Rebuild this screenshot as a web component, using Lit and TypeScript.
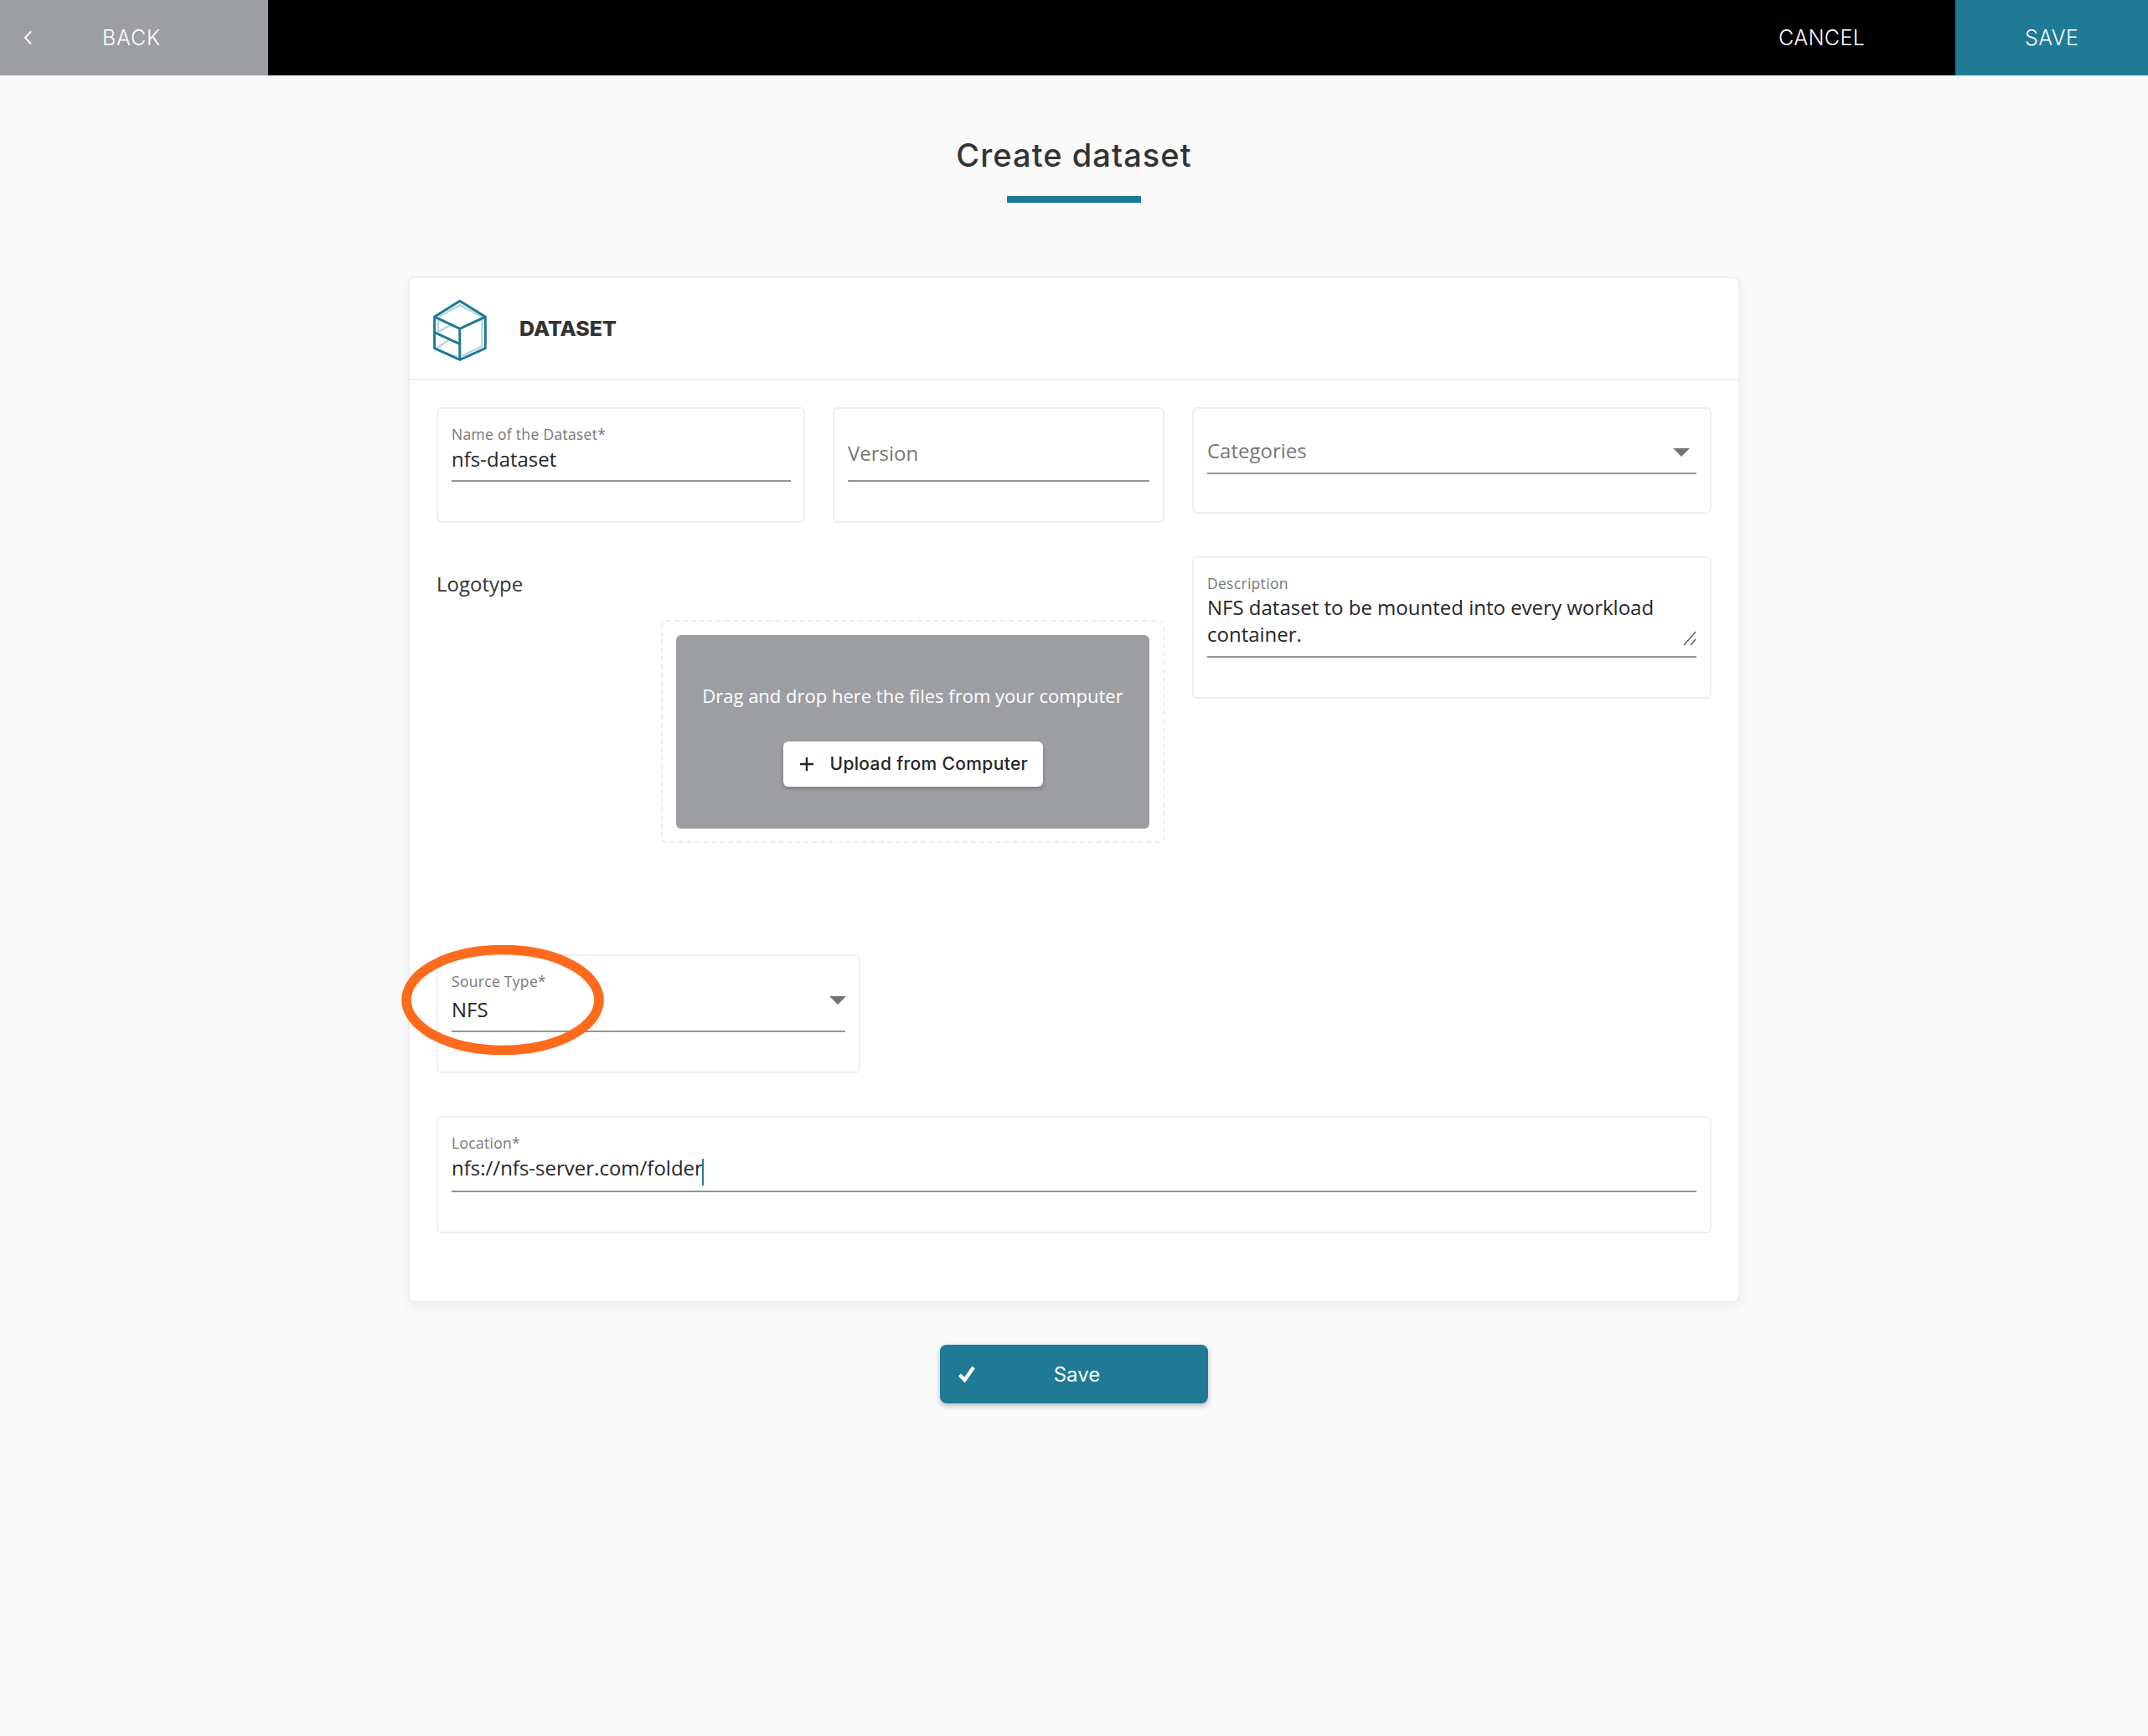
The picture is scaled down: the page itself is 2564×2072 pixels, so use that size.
import { LitElement, html, css } from "lit";
import { customElement } from "lit/decorators.js";

@customElement("app-root")
export class AppRoot extends LitElement {
  static styles = css`
    :host { display: block; position: relative; min-height: 2072px; background: #fafafa; font-family: "Open Sans", sans-serif; color: #262626; overflow: hidden; }
    * { box-sizing: border-box; }
    .top { display: flex; align-items: stretch; height: 90px; background: #000; color: #fff; font-family: Inter, sans-serif; font-size: 25px; font-weight: 300; line-height: 90px; }
    .back { position: relative; width: 320px; background: #9d9ea2; padding-left: 122px; display: flex; letter-spacing: 0.8px; }
    .back svg { position: absolute; left: 27px; top: 36px; }
    .spacer { flex: 1; }
    .cancel { width: 211px; letter-spacing: 0.4px; }
    .save-top { width: 230px; background: #1f7a96; padding-left: 83px; letter-spacing: 0.4px; }
    .title { margin: 73px 0 0; text-align: center; font-family: Inter, sans-serif; font-weight: 500; font-size: 38px; line-height: 44px; color: #333; letter-spacing: 1.05px; }
    .rule { width: 160px; height: 8px; background: #1f7a96; margin: 27px auto 88px; }
    .card { width: 1590px; margin: 0 auto; background: #fff; border: 2px solid #eeeeee; border-radius: 8px; box-shadow: 0 4px 14px rgba(30,50,70,.07); }
    .card-head { display: flex; align-items: center; height: 122px; border-bottom: 2px solid #eceef0; padding-left: 24px; }
    .card-head svg { margin-top: 3px; }
    .card-head h2 { margin: 0 0 0 34px; font-family: Inter, sans-serif; font-weight: 800; font-size: 25px; color: #333; letter-spacing: 0; }
    .body { padding: 32px 32px 81px 32px; }
    .row { display: flex; gap: 33px; align-items: flex-start; }
    .field { background: #fff; border: 2px solid #eeeeee; border-radius: 6px; padding: 20px 16px 47px; position: relative; }
    .label { font-size: 17.5px; line-height: 20px; color: #777; letter-spacing: 0.3px; }
    .value { font-size: 24px; line-height: 30px; margin-top: 5px; padding-bottom: 10px; border-bottom: 2px solid #949494; position: relative; color: #262626; }
    .placeholder { color: #777; }
    .name { width: 440px; padding-right: 15px; }
    .version { width: 396px; padding-top: 38px; }
    .version .value { margin-top: 0; padding-bottom: 17px; }
    .cats { flex: 1; padding-top: 35px; padding-bottom: 45px; }
    .cats .value { margin-top: 0; padding-bottom: 11px; }
    .arrow { position: absolute; width: 0; height: 0; border-left: 10px solid transparent; border-right: 10px solid transparent; border-top: 10px solid #757575; }
    .cats .arrow { top: 12px; right: 8px; }
    .row2 { margin-top: 40px; }
    .left { width: 869px; padding-top: 18px; }
    .logo-label { font-size: 24px; line-height: 30px; color: #333; }
    .drop { margin: 28px 0 0 268px; width: 601px; height: 266px; border: 2px dashed #eeeeee; border-radius: 6px; padding: 16px 16px 15px 16px; }
    .drop-inner { height: 231px; background: #9d9ea2; border-radius: 6px; color: #fff; display: flex; flex-direction: column; align-items: center; padding-top: 57px; font-size: 22px; line-height: 30px; }
    .upload { margin-top: 40px; width: 310px; height: 54px; background: #fff; border-radius: 6px; box-shadow: 0 2px 4px rgba(0,0,0,.25); display: flex; align-items: center; color: #262626; font-family: Inter, sans-serif; font-weight: 500; font-size: 21px; padding-left: 18px; letter-spacing: 0.35px; }
    .upload svg { margin-right: 18px; }
    .desc { flex: 1; }
    .desc .value { margin-top: 3px; line-height: 32px; }
    .grip { position: absolute; right: 0; bottom: 12px; }
    .source { width: 506px; margin-top: 133px; }
    .source .value { margin-top: 9px; }
    .source .arrow { top: 48px; right: 15px; }
    .location { margin-top: 51px; }
    .caret { display: inline-block; width: 2px; height: 32px; margin: -4px 0 -4px -1px; background: #1f7a96; vertical-align: -8px; }
    .save { position: relative; display: flex; align-items: center; justify-content: center; width: 320px; height: 70px; margin: 50px auto 0; background: #1f7a96; border-radius: 8px; color: #fff; font-family: Inter, sans-serif; font-size: 24px; box-shadow: 0 3px 6px rgba(0,0,0,.25); padding-left: 7px; }
    .save svg { position: absolute; left: 21px; top: 24px; }
    .mark { position: absolute; left: 479px; top: 1128px; pointer-events: none; }
  `;

  render() {
    return html`
      <div class="top">
        <div class="back">
          <svg width="12" height="18" viewBox="0 0 12 18"><path d="M10 1.5 3 9l7 7.5" fill="none" stroke="#fff" stroke-width="2"/></svg>
          BACK
        </div>
        <div class="spacer"></div>
        <div class="cancel">CANCEL</div>
        <div class="save-top">SAVE</div>
      </div>
      <h1 class="title">Create dataset</h1>
      <div class="rule"></div>
      <div class="card">
        <div class="card-head">
          <svg width="73" height="80" viewBox="100 100 220 240" fill="none" stroke-linejoin="round" stroke-linecap="round">
            <g stroke="#b5d6df" stroke-width="7">
              <path d="M135 170 208 130 284 170M288 182V278M218 312 288 278M130 185V222M130 225 170 205M130 282 170 255M130 292 198 316"/>
            </g>
            <g stroke="#1f7a96" stroke-width="9">
              <path d="M208 115 300 172V285L208 327 117 285V172ZM117 172 208 215 300 172M208 215V327M117 228 208 270"/>
            </g>
          </svg>
          <h2>DATASET</h2>
        </div>
        <div class="body">
          <div class="row">
            <div class="field name">
              <div class="label">Name of the Dataset*</div>
              <div class="value">nfs-dataset</div>
            </div>
            <div class="field version">
              <div class="value placeholder">Version</div>
            </div>
            <div class="field cats">
              <div class="value placeholder">Categories<span class="arrow"></span></div>
            </div>
          </div>
          <div class="row row2">
            <div class="left">
              <div class="logo-label">Logotype</div>
              <div class="drop">
                <div class="drop-inner">
                  <div>Drag and drop here the files from your computer</div>
                  <div class="upload">
                    <svg width="20" height="20" viewBox="0 0 20 20"><path d="M10 2V18M2 10H18" stroke="#262626" stroke-width="2.4"/></svg>
                    Upload from Computer
                  </div>
                </div>
              </div>
            </div>
            <div class="field desc">
              <div class="label">Description</div>
              <div class="value">NFS dataset to be mounted into every workload<br />container.
                <svg class="grip" width="16" height="18" viewBox="0 0 16 18"><path d="M1 17 15 1M9 17 15 10" stroke="#555" stroke-width="1.3" fill="none"/></svg>
              </div>
            </div>
          </div>
          <div class="field source">
            <div class="label">Source Type*</div>
            <div class="value">NFS</div>
            <span class="arrow"></span>
          </div>
          <div class="field location">
            <div class="label">Location*</div>
            <div class="value">nfs://nfs-server.com/folder<span class="caret"></span></div>
          </div>
        </div>
      </div>
      <div class="save">
        <svg width="22" height="22" viewBox="0 0 22 22"><path d="M2.5 12 8.5 18 19 3" fill="none" stroke="#fff" stroke-width="4.4"/></svg>
        Save
      </div>
      <svg class="mark" width="242" height="131" viewBox="0 0 242 131">
        <ellipse cx="121" cy="65.5" rx="115" ry="60" fill="none" stroke="#ff6a1c" stroke-width="11.5"/>
      </svg>
    `;
  }
}
